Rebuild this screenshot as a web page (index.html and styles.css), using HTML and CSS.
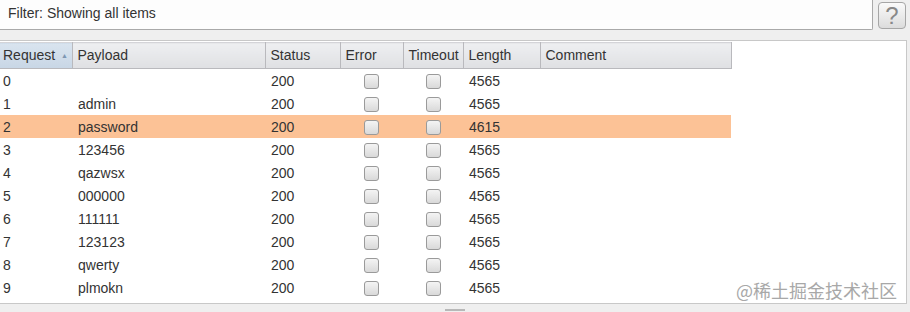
FILE: index.html
```html
<!DOCTYPE html>
<html lang="en">

<head>
    <meta charset="UTF-8">
    <title>Intruder results</title>
    <link rel="stylesheet" href="styles.css">
</head>

<body>
    <div class="filter-row">
        <div class="filter">Filter: Showing all items</div>
        <div class="help">?</div>
    </div>

    <div class="results">
        <table>
            <colgroup>
                <col style="width:72px"><col style="width:193px"><col style="width:75px"><col style="width:63px">
                <col style="width:60px"><col style="width:77px"><col style="width:191px">
            </colgroup>
            <thead>
                <tr>
                    <th class="sorted">Request <span class="arrow">&#9650;</span></th>
                    <th>Payload</th>
                    <th>Status</th>
                    <th>Error</th>
                    <th>Timeout</th>
                    <th>Length</th>
                    <th>Comment</th>
                </tr>
            </thead>
            <tbody>
                <tr><td>0</td><td></td><td>200</td><td class="chk"><span class="box"></span></td><td class="chk"><span class="box"></span></td><td>4565</td><td></td></tr>
                <tr><td>1</td><td>admin</td><td>200</td><td class="chk"><span class="box"></span></td><td class="chk"><span class="box"></span></td><td>4565</td><td></td></tr>
                <tr class="hit"><td>2</td><td>password</td><td>200</td><td class="chk"><span class="box"></span></td><td class="chk"><span class="box"></span></td><td>4615</td><td></td></tr>
                <tr><td>3</td><td>123456</td><td>200</td><td class="chk"><span class="box"></span></td><td class="chk"><span class="box"></span></td><td>4565</td><td></td></tr>
                <tr><td>4</td><td>qazwsx</td><td>200</td><td class="chk"><span class="box"></span></td><td class="chk"><span class="box"></span></td><td>4565</td><td></td></tr>
                <tr><td>5</td><td>000000</td><td>200</td><td class="chk"><span class="box"></span></td><td class="chk"><span class="box"></span></td><td>4565</td><td></td></tr>
                <tr><td>6</td><td>111111</td><td>200</td><td class="chk"><span class="box"></span></td><td class="chk"><span class="box"></span></td><td>4565</td><td></td></tr>
                <tr><td>7</td><td>123123</td><td>200</td><td class="chk"><span class="box"></span></td><td class="chk"><span class="box"></span></td><td>4565</td><td></td></tr>
                <tr><td>8</td><td>qwerty</td><td>200</td><td class="chk"><span class="box"></span></td><td class="chk"><span class="box"></span></td><td>4565</td><td></td></tr>
                <tr><td>9</td><td>plmokn</td><td>200</td><td class="chk"><span class="box"></span></td><td class="chk"><span class="box"></span></td><td>4565</td><td></td></tr>
            </tbody>
        </table>
        <div class="watermark">@稀土掘金技术社区</div>
    </div>

    <div class="splitter"><span class="grip"></span></div>
</body>

</html>
```

FILE: styles.css
```css
body {
    margin: 0;
    width: 910px;
    height: 312px;
    overflow: hidden;
    background-color: #efefef;
    font-family: "Liberation Sans", Arial, sans-serif;
    font-size: 14px;
    color: #333;
}

.filter-row {
    display: flex;
    align-items: flex-start;
    height: 40px;
}

.filter {
    width: 864px;
    height: 29px;
    padding-left: 8px;
    line-height: 26px;
    background-color: #fdfdfd;
    border-right: 1px solid #a9a9a9;
    border-bottom: 1px solid #a9a9a9;
    border-bottom-right-radius: 2px;
}

.help {
    width: 26px;
    height: 25px;
    margin: 2px 0 0 5px;
    border: 1px solid #a6a6a6;
    border-radius: 4px;
    background: linear-gradient(#fafafa, #dcdcdc);
    color: #888;
    font-size: 24px;
    line-height: 25px;
    text-align: center;
}

.results {
    position: relative;
    width: 906px;
    height: 261px;
    background-color: #fff;
    border: 1px solid #c8c8c8;
    border-left: none;
    padding-top: 1px;
}

table {
    border-collapse: collapse;
    table-layout: fixed;
    width: 731px;
}

th {
    height: 23px;
    padding: 0 0 2px 5px;
    text-align: left;
    font-weight: normal;
    color: #333;
    background: linear-gradient(#eeeff1, #dfe0e3);
    border-right: 1px solid #b9b9bd;
    border-bottom: 1px solid #b9b9bd;
    border-top: 1px solid #d4d4d8;
}

th.sorted {
    padding-left: 3px;
    background: linear-gradient(#d9e4ef, #c8d6e5);
}

.arrow {
    font-size: 7px;
    color: #7d96b2;
    vertical-align: 2px;
    margin-left: 2px;
}

td {
    height: 23px;
    padding: 0 0 0 6px;
    white-space: nowrap;
}

td:first-child {
    padding-left: 3px;
}

tr.hit td {
    background-color: #fcc296;
}

td.chk {
    padding: 0;
    text-align: center;
}

.box {
    display: inline-block;
    width: 13px;
    height: 13px;
    margin-top: 4px;
    border: 1px solid #9a9a9a;
    border-radius: 3px;
    background: linear-gradient(#f4f4f4, #d9d9d9);
}

.watermark {
    position: absolute;
    right: 9px;
    bottom: 0;
    font-family: "Noto Sans CJK SC", sans-serif;
    font-size: 18px;
    color: #a8a8a8;
}

.splitter {
    display: flex;
    justify-content: center;
    padding-top: 5px;
}

.grip {
    width: 20px;
    height: 2px;
    background-color: #b8b8b8;
}
```
